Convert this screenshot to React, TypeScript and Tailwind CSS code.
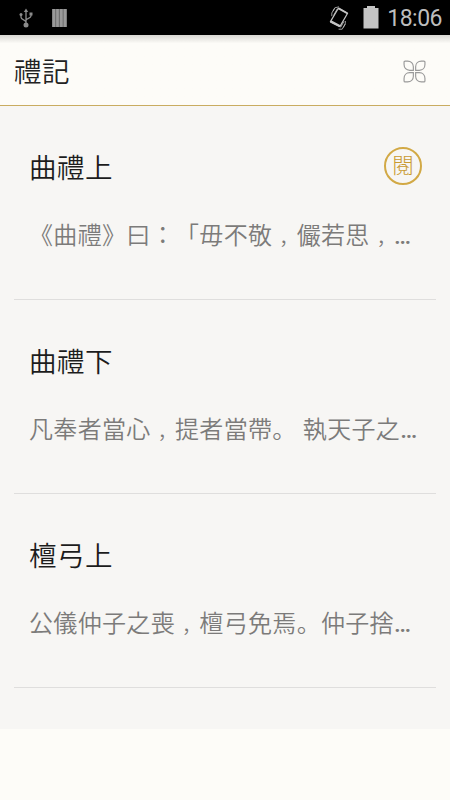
import { Fragment } from 'react';

const CHAPTERS: { title: string; excerpt: string; reading?: boolean }[] = [
  { title: '曲禮上', excerpt: '《曲禮》曰：「毋不敬，儼若思，', reading: true },
  { title: '曲禮下', excerpt: '凡奉者當心，提者當帶。 執天子之' },
  { title: '檀弓上', excerpt: '公儀仲子之喪，檀弓免焉。仲子捨' },
];

function UsbIcon() {
  return (
    <svg width="14" height="20" viewBox="0 0 14 20" fill="none" stroke="#8b8b8b" strokeWidth="1.3">
      <path d="M7 3v13M2 7v2.2c0 2.6 5 2.7 5 5M12 6v2c0 2.6-5 2-5 4.6" />
      <path d="M7 .5 9.2 4H4.8z" fill="#8b8b8b" stroke="none" />
      <circle cx="7" cy="17" r="2.5" fill="#8b8b8b" stroke="none" />
      <circle cx="2" cy="6.5" r="1.5" fill="#8b8b8b" stroke="none" />
      <path d="M10.5 4.5h3v3h-3z" fill="#8b8b8b" stroke="none" />
    </svg>
  );
}

function BarsIcon() {
  return (
    <svg width="15" height="18" viewBox="0 0 15 18">
      <path d="M0 0h15v18H0z" fill="#6e6e6e" />
      <path d="M.5 0h2.6v18H.5zM4.2 0h2.6v18H4.2zM8 0h2.6v18H8zM11.7 0h2.6v18h-2.6z" fill="#999" />
    </svg>
  );
}

function RotateIcon() {
  return (
    <svg width="20" height="24" viewBox="0 0 20 24" fill="none" stroke="#c4c4c4">
      <path d="M9.4 2.2 18.6 7.2 11 20.4 1.4 15.6z" strokeWidth="1.2" strokeLinejoin="round" />
      <path d="m1.6 15.4 9.4 4.8" strokeWidth="2.4" />
      <path d="m9.6 2.4 8.6 4.8" strokeWidth="1.8" />
      <path d="M2.8 10.2V7l3-5.2L10 .8M4.6 9.4l3.8-6.8M4 5.2l1.6-2.8M9.6 23.2h3.6l3-5.2.2-3M11.6 21.4l3.4-6M14.2 21.6l2-3.6" strokeWidth=".8" />
    </svg>
  );
}

function BatteryIcon() {
  return (
    <svg width="16" height="23" viewBox="0 0 16 23" fill="#c4c4c4">
      <path d="M4 0h8v2h3.5v20.5H.5V2H4z" />
    </svg>
  );
}

function CloverIcon() {
  return (
    <svg width="23" height="23" viewBox="0 0 24 24" fill="none" stroke="#999" strokeWidth="1.2">
      <path d="M10.8 10.8H7C3.4 10.8 1.1 8.2 1.1 4.8V2.2c0-.7.4-1.1 1.1-1.1h2.6c3.4 0 6 2.3 6 5.9z" />
      <path d="M13.2 10.8H17c3.6 0 5.9-2.6 5.9-6V2.2c0-.7-.4-1.1-1.1-1.1h-2.6c-3.4 0-6 2.3-6 5.9z" />
      <path d="M10.8 13.2H7c-3.6 0-5.9 2.6-5.9 6v2.6c0 .7.4 1.1 1.1 1.1h2.6c3.4 0 6-2.3 6-5.9z" />
      <path d="M13.2 13.2H17c3.6 0 5.9 2.6 5.9 6v2.6c0 .7-.4 1.1-1.1 1.1h-2.6c-3.4 0-6-2.3-6-5.9z" />
    </svg>
  );
}

// Commas sit in the middle of their cell, on the baseline
function Excerpt({ text }: { text: string }) {
  return (
    <p className="h-9 text-[24px] leading-9 font-[350] tracking-[0.33px] whitespace-nowrap text-[#7c7b7a] [text-spacing-trim:space-all]">
      {text.split('，').map((part, i) => (
        <Fragment key={i}>
          {i > 0 && (
            <span className="inline-block w-[24.33px] pl-[7px] align-[-1px] text-[19px] leading-none [font-feature-settings:'halt']">，</span>
          )}
          {part}
        </Fragment>
      ))}
      <span className="font-medium tracking-normal">…</span>
    </p>
  );
}

export default function App() {
  return (
    <div className="flex h-[800px] w-[450px] flex-col overflow-hidden bg-[#fdfcf8] font-[Roboto,'Noto_Sans_CJK_JP',sans-serif]">
      <div className="flex h-[35px] shrink-0 items-center bg-black pr-2 pl-[19px]">
        <UsbIcon />
        <div className="ml-[19px]">
          <BarsIcon />
        </div>
        <div className="ml-auto flex items-center">
          <RotateIcon />
          <div className="mr-[8px] ml-[14px]">
            <BatteryIcon />
          </div>
          <span className="pt-[2px] text-[23px] leading-8 tracking-[-0.5px] text-[#bdbdbd]">18:06</span>
        </div>
      </div>

      <header className="flex h-[71px] shrink-0 items-center justify-between border-b border-[#c9ac60] bg-linear-to-b from-[#d8d7d3] via-[#fdfcf8] via-12% to-[#fdfcf8] pr-[24px] pl-[14px]">
        <h1 className="pt-[6px] text-[27.5px] leading-10 font-[350] tracking-[0.5px] text-[#222]">禮記</h1>
        <div className="pt-[2px]">
          <CloverIcon />
        </div>
      </header>

      <main className="h-[623px] shrink-0 bg-[#f7f6f4] px-[14px]">
        {CHAPTERS.map(({ title, excerpt, reading }) => (
          <section key={title} className="h-[194px] border-b border-[#dfdedd] pt-[40px] pl-[15px]">
            <div className="flex h-10 items-center justify-between pr-[14px]">
              <h2 className="pt-[6px] text-[27.5px] leading-10 font-[350] tracking-[0.5px] text-[#1c1c1c]">{title}</h2>
              {reading && (
                <span className="flex size-[38px] items-center justify-center rounded-full border-2 border-[#d2a945] text-[22px] leading-none font-light text-[#c99a30]">
                  閱
                </span>
              )}
            </div>
            <div className="pt-[32px]">
              <Excerpt text={excerpt} />
            </div>
          </section>
        ))}
      </main>
    </div>
  );
}
